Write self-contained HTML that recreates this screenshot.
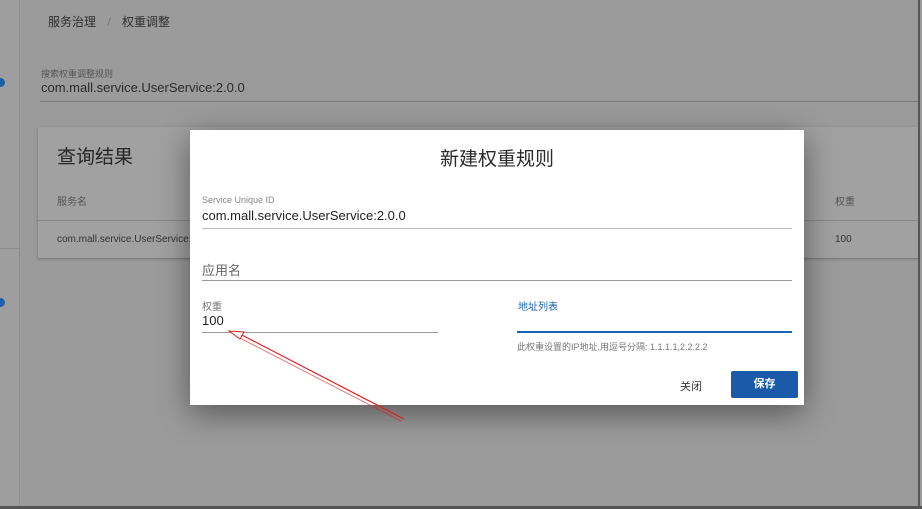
<!DOCTYPE html>
<html><head><meta charset="utf-8"><style>
*{margin:0;padding:0;box-sizing:border-box}
body{width:922px;height:509px;overflow:hidden;background:#9b9b9b;font-family:"Liberation Sans","Noto Sans CJK SC",sans-serif;position:relative;color:#222}
.abs{position:absolute}
.side{left:0;top:0;width:20px;height:506px;background:#9e9e9e;border-right:1px solid #8e8e8e}
.card{left:38px;top:127px;width:880px;height:131px;background:#a1a1a1;box-shadow:0 1px 3px rgba(0,0,0,.25)}
.dlg{left:190px;top:130px;width:614px;height:275px;background:#fff;box-shadow:0 8px 30px rgba(0,0,0,.45)}
.t{font-size:12px}
</style></head><body>
<div class="abs side"></div>
<div class="abs" style="left:0;top:78px;width:5px;height:9px;background:#1a5fa8;border-radius:0 5px 5px 0"></div>
<div class="abs" style="left:0;top:298px;width:5px;height:9px;background:#1a5fa8;border-radius:0 5px 5px 0"></div>
<div class="abs" style="left:0;top:248px;width:20px;height:1px;background:#8e8e8e"></div>
<div class="abs t" style="left:48px;top:13px;color:#2e2e2e">服务治理 <span style="color:#777;margin:0 8px">/</span> 权重调整</div>
<div class="abs" style="left:41px;top:67px;font-size:9px;color:#555">搜索权重调整规则</div>
<div class="abs" style="left:41px;top:80px;font-size:13px;color:#2a2a2a">com.mall.service.UserService:2.0.0</div>
<div class="abs" style="left:40px;top:101px;width:878px;height:1px;background:#7a7a7a"></div>
<div class="abs card"></div>
<div class="abs" style="left:57px;top:142px;font-size:19px;color:#262626">查询结果</div>
<div class="abs" style="left:57px;top:193px;font-size:10px;color:#555">服务名</div>
<div class="abs" style="left:835px;top:193px;font-size:10px;color:#555">权重</div>
<div class="abs" style="left:38px;top:220px;width:880px;height:1px;background:#8a8a8a"></div>
<div class="abs" style="left:57px;top:234px;font-size:10px;color:#333">com.mall.service.UserService:2</div>
<div class="abs" style="left:835px;top:234px;font-size:10px;color:#333">100</div>
<div class="abs" style="left:38px;top:258px;width:880px;height:1px;background:#7e7e7e"></div>
<div class="abs" style="left:918px;top:0;width:2px;height:509px;background:#555"></div>
<div class="abs" style="left:0;top:506px;width:922px;height:3px;background:#555"></div>
<div class="abs dlg">
 <div class="abs" style="left:0;width:614px;top:14px;text-align:center;font-size:19px;color:#2a2a2a">新建权重规则</div>
 <div class="abs" style="left:12px;top:65px;font-size:9px;color:#888">Service Unique ID</div>
 <div class="abs" style="left:12px;top:78px;font-size:13px;color:#222">com.mall.service.UserService:2.0.0</div>
 <div class="abs" style="left:12px;top:98px;width:590px;height:1px;background:#bbb"></div>
 <div class="abs" style="left:12px;top:130px;font-size:13px;color:#666">应用名</div>
 <div class="abs" style="left:12px;top:150px;width:590px;height:1px;background:#999"></div>
 <div class="abs" style="left:12px;top:168px;font-size:10px;color:#777">权重</div>
 <div class="abs" style="left:12px;top:183px;font-size:13px;color:#222">100</div>
 <div class="abs" style="left:12px;top:202px;width:236px;height:1px;background:#999"></div>
 <div class="abs" style="left:328px;top:168px;font-size:10px;color:#1a64b8">地址列表</div>
 <div class="abs" style="left:327px;top:201px;width:275px;height:2px;background:#1a64b8"></div>
 <div class="abs" style="left:327px;top:210px;font-size:9px;color:#777">此权重设置的IP地址,用逗号分隔: 1.1.1.1,2.2.2.2</div>
 <div class="abs" style="left:490px;top:248px;font-size:11px;color:#333">关闭</div>
 <div class="abs" style="left:541px;top:241px;width:67px;height:27px;background:#1b5aa8;color:#fff;font-size:11px;font-weight:bold;text-align:center;line-height:27px;border-radius:2px">保存</div>
</div>
<svg class="abs" style="left:0;top:0" width="922" height="509">
 <path d="M404 419 L240 334" stroke="#e02020" stroke-width="1.2" fill="none"/>
 <path d="M401 421 L238 337" stroke="#e02020" stroke-width="1" fill="none" opacity=".6"/>
 <path d="M229 331 L244 332 L240 339 Z" fill="#fff" stroke="#e02020" stroke-width="1"/>
</svg>
</body></html>
